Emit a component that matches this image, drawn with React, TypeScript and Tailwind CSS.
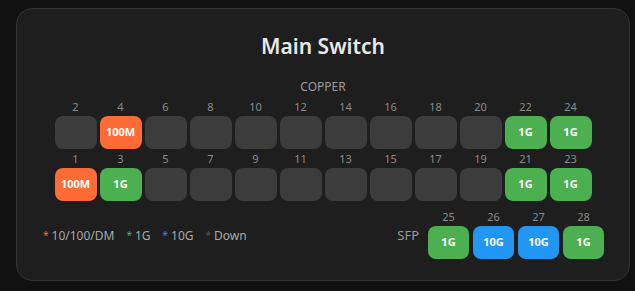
import React from "react";

type Speed = "100M" | "1G" | "10G" | "";

const colors: Record<string, string> = {
  "100M": "bg-[#ff6b35]",
  "1G": "bg-[#4caf50]",
  "10G": "bg-[#2196f3]",
  "": "bg-[#3c3c3c]",
};

const topRow: [number, Speed][] = [
  [2, ""], [4, "100M"], [6, ""], [8, ""], [10, ""], [12, ""],
  [14, ""], [16, ""], [18, ""], [20, ""], [22, "1G"], [24, "1G"],
];

const bottomRow: [number, Speed][] = [
  [1, "100M"], [3, "1G"], [5, ""], [7, ""], [9, ""], [11, ""],
  [13, ""], [15, ""], [17, ""], [19, ""], [21, "1G"], [23, "1G"],
];

const sfp: [number, Speed][] = [
  [25, "1G"], [26, "10G"], [27, "10G"], [28, "1G"],
];

function Port({ num, speed, w }: { num: number; speed: Speed; w: string }) {
  return (
    <div className="flex flex-col items-center">
      <span className="text-[11px] leading-[14px] text-[#8a8a8a] mb-[2px]">{num}</span>
      <div
        className={`${w} h-[33px] rounded-lg flex items-center justify-center text-white text-[11px] font-bold ${colors[speed]}`}
      >
        {speed}
      </div>
    </div>
  );
}

function Legend({ color, label }: { color: string; label: string }) {
  return (
    <span>
      <span className={`${color} text-[10px] mr-[3px] relative -top-[1px]`}>*</span>
      {label}
    </span>
  );
}

export default function App() {
  return (
    <div
      className="bg-[#111111] h-[291px] pt-2 pl-4"
      style={{ fontFamily: '"Noto Sans", "Open Sans", sans-serif' }}
    >
      <div className="w-[614px] h-[273px] bg-[#1e1e1e] border border-[#333333] rounded-2xl pt-[22px] px-[25px] flex flex-col">
        <h1 className="text-center text-[21px] leading-[30px] font-semibold text-[#e8e8e8]">Main Switch</h1>

        <div className="text-center text-[12px] leading-4 text-[#9a9a9a] mt-[18px]">COPPER</div>

        <div className="flex flex-col items-center mt-[5px] gap-[3px]">
          <div className="flex gap-[3px]">
            {topRow.map(([n, s]) => (
              <Port key={n} num={n} speed={s} w="w-[42px]" />
            ))}
          </div>
          <div className="flex gap-[3px]">
            {bottomRow.map(([n, s]) => (
              <Port key={n} num={n} speed={s} w="w-[42px]" />
            ))}
          </div>
        </div>

        <div className="flex justify-between items-center mt-[9px]">
          <div className="flex items-center gap-3 text-[12px] text-[#a8a8a8] pl-[1px] pt-[3px]">
            <Legend color="text-[#ff6b35]" label="10/100/DM" />
            <Legend color="text-[#4caf50]" label="1G" />
            <Legend color="text-[#2196f3]" label="10G" />
            <Legend color="text-[#555555]" label="Down" />
          </div>
          <div className="flex items-center gap-[9px]">
            <span className="text-[13px] text-[#9a9a9a] pt-[3px]">SFP</span>
            <div className="flex gap-1">
              {sfp.map(([n, s]) => (
                <Port key={n} num={n} speed={s} w="w-[41px]" />
              ))}
            </div>
          </div>
        </div>
      </div>
    </div>
  );
}
